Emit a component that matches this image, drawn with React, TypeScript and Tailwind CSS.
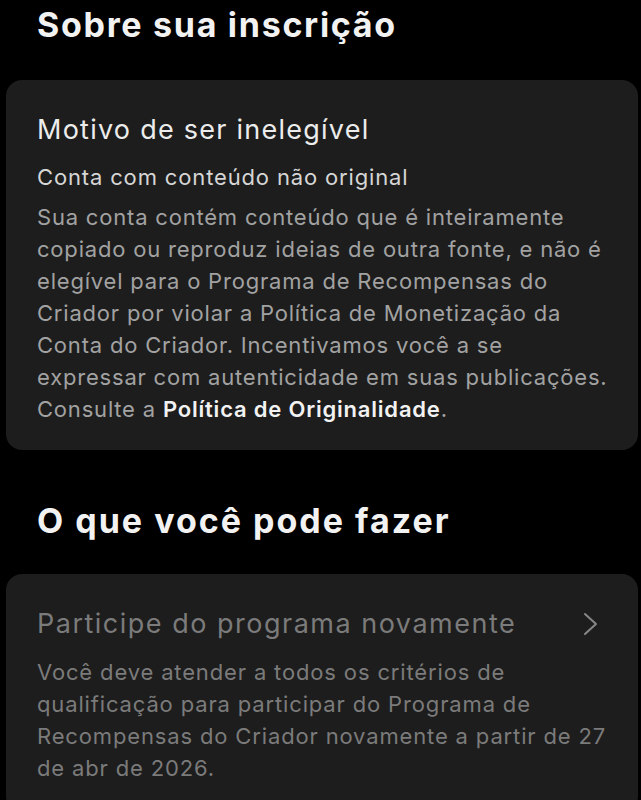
export default function App() {
  return (
    <div className="w-[641px] h-[800px] overflow-hidden bg-black text-white" style={{ fontFamily: 'Inter, "Noto Sans", sans-serif' }}>
      <h1 className="pl-[37px] pt-[3px] text-[34px] leading-[44px] font-bold tracking-[1.7px] text-[#f2f2f2] whitespace-nowrap">Sobre sua inscrição</h1>
      <div className="ml-[6px] mt-[33px] w-[632px] rounded-[16px] bg-[#1d1d1d] pl-[31px] pr-[10px] pt-[32px] pb-[25px]">
        <div className="text-[27px] leading-[36px] tracking-[1.25px] text-[#ececec] whitespace-nowrap">Motivo de ser inelegível</div>
        <div className="mt-[13px] text-[22px] leading-[32px] tracking-[0.85px] text-[#d6d6d6] whitespace-nowrap">Conta com conteúdo não original</div>
        <p className="mt-[8px] text-[22px] leading-[32px] tracking-[0.8px] text-[#a2a2a2] whitespace-nowrap">
          Sua conta contém conteúdo que é inteiramente<br />
          copiado ou reproduz ideias de outra fonte, e não é<br />
          elegível para o Programa de Recompensas do<br />
          Criador por violar a Política de Monetização da<br />
          Conta do Criador. Incentivamos você a se<br />
          expressar com autenticidade em suas publicações.<br />
          Consulte a <span className="font-semibold text-[#f2f2f2]">Política de Originalidade</span>.
        </p>
      </div>
      <h2 className="pl-[37px] mt-[49px] text-[34px] leading-[44px] font-bold tracking-[2px] text-[#f2f2f2] whitespace-nowrap">O que você pode fazer</h2>
      <div className="ml-[6px] mt-[31px] w-[632px] rounded-[16px] bg-[#1d1d1d] pl-[31px] pr-[10px] pt-[32px] pb-[28px]">
        <div className="flex items-center justify-between">
          <div className="text-[27px] leading-[36px] tracking-[1.5px] text-[#7b7b7b] whitespace-nowrap">Participe do programa novamente</div>
          <svg width="16" height="24" viewBox="0 0 16 24" className="mr-[30px]" fill="none" stroke="#878787" strokeWidth="2" strokeLinecap="round" strokeLinejoin="round">
            <path d="M3 2 L14 12 L3 22" />
          </svg>
        </div>
        <p className="mt-[14px] text-[22px] leading-[32px] tracking-[0.85px] text-[#7b7b7b] whitespace-nowrap">
          Você deve atender a todos os critérios de<br />
          qualificação para participar do Programa de<br />
          Recompensas do Criador novamente a partir de 27<br />
          de abr de 2026.
        </p>
      </div>
    </div>
  );
}
